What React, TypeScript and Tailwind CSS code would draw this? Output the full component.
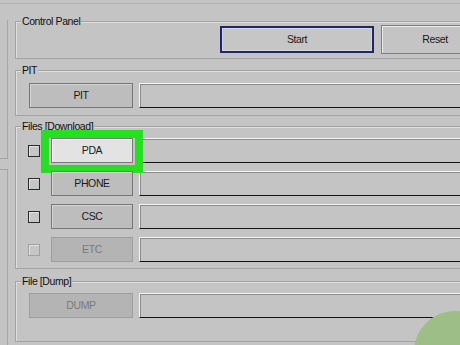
import React from 'react';

const font = { fontFamily: '"Liberation Sans", Arial, sans-serif' };

function Group({ title, className, children }: { title: string; className?: string; children: React.ReactNode }) {
  return (
    <div className={`w-[460px] border border-[#a3a3a3] shadow-[inset_1px_1px_0_#dedede] ${className ?? ''}`}>
      <div className="-mt-[7px] ml-[5px] w-fit px-[1px] bg-[#c4c4c4] leading-[12px] text-[#111]">{title}</div>
      {children}
    </div>
  );
}

function Field() {
  return (
    <div className="w-[330px] shrink-0 h-[25px] border border-t-[#f4f4f4] border-l-[#f4f4f4] border-b-[#111] border-r-[#111] shadow-[inset_1px_1px_0_#8c8c8c] bg-[#c4c4c4]" />
  );
}

function FileButton({ label, w, disabled, active }: { label: string; w: string; disabled?: boolean; active?: boolean }) {
  const tone = disabled
    ? 'bg-[#b4b4b4] border-[#9e9e9e] text-[#7a7a7a] shadow-none'
    : active
      ? 'bg-[#e3e3e3] border-[#7a7a7a] text-[#1a1a1a] shadow-[inset_1px_1px_0_#ffffff]'
      : 'bg-[#bdbdbd] border-[#767676] text-[#1a1a1a] shadow-[inset_1px_1px_0_#d6d6d6]';
  return (
    <div className={`${w} shrink-0 h-[25px] border flex items-center justify-center ${tone}`}>{label}</div>
  );
}

function Checkbox({ disabled }: { disabled?: boolean }) {
  return (
    <div
      className={`w-[12px] h-[12px] shrink-0 border ${disabled ? 'border-[#a0a0a0]' : 'border-[#2a2a2a]'} shadow-[inset_1px_1px_0_#e4e4e4] bg-[#c6c6c6]`}
    />
  );
}

const rows = [
  { label: 'PDA', active: true },
  { label: 'PHONE' },
  { label: 'CSC' },
  { label: 'ETC', disabled: true },
];

export default function App() {
  return (
    <div className="relative w-[460px] h-[345px] overflow-hidden bg-[#c4c4c4] text-[10.5px] tracking-[-0.4px]" style={font}>
      {/* top edge */}
      <div className="h-[4px] border-b border-[#b3b3b3]" />

      <div className="flex">
        {/* left window strip */}
        <div className="w-[8px] shrink-0 flex flex-col pt-[16px]">
          <div className="h-[139px] border-r border-b border-[#a6a6a6]" />
          <div className="h-[10px]" />
          <div className="h-[180px] border-r border-t border-[#a6a6a6]" />
        </div>

        <div className="shrink-0 pl-[7px] pt-[17px]">
          {/* Control Panel */}
          <Group title="Control Panel" className="pb-[4px]">
            <div className="-mt-[2px] ml-[204px] flex items-center gap-[7px] h-[29px]">
              <div className="w-[154px] shrink-0 h-[27px] border-2 border-[#1f2766] shadow-[inset_0_0_0_1px_#d4d4e8] bg-[#c6c6c6] flex items-center justify-center text-[#1a1a1a]">
                Start
              </div>
              <div className="w-[120px] shrink-0 h-[29px] border border-[#7e7e7e] shadow-[inset_1px_1px_0_#ececec] bg-[#c4c4c4] flex items-center justify-center text-[#1a1a1a] pr-[12px]">
                Reset
              </div>
            </div>
          </Group>

          {/* PIT */}
          <Group title="PIT" className="mt-[11px] pb-[7px]">
            <div className="mt-[7px] ml-[13px] flex gap-[6px]">
              <FileButton label="PIT" w="w-[104px]" />
              <Field />
            </div>
          </Group>

          {/* Files */}
          <Group title="Files [Download]" className="mt-[10px] pb-[6px]">
            <div className="mt-[6px] flex flex-col gap-[8px]">
              {rows.map((r) => (
                <div key={r.label} className="ml-[12px] flex items-center">
                  <Checkbox disabled={r.disabled} />
                  <div className="relative ml-[11px] mr-[6px]">
                    <FileButton label={r.label} w="w-[82px]" disabled={r.disabled} active={r.active} />
                    {r.active && (
                      <div className="absolute -left-[10px] -right-[10px] -top-[8px] -bottom-[10px] border-[8px] border-[#27df22]" />
                    )}
                  </div>
                  <Field />
                </div>
              ))}
            </div>
          </Group>

          {/* Dump */}
          <Group title="File [Dump]" className="mt-[12px] pb-[23px]">
            <div className="mt-[6px] ml-[13px] flex gap-[6px]">
              <FileButton label="DUMP" w="w-[104px]" disabled />
              <Field />
            </div>
          </Group>
        </div>
      </div>

      {/* fingertip pointer */}
      <div className="absolute left-[414px] top-[311px] w-[82px] h-[82px] rounded-full bg-[#9dbe86]" />
    </div>
  );
}
